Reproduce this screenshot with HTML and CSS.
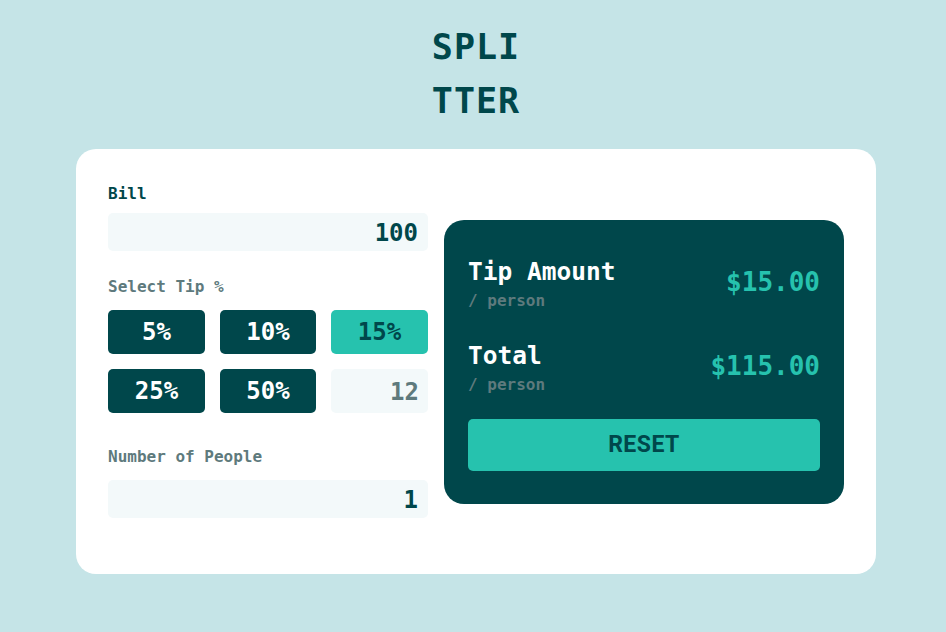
FILE: index.html
```html
<!DOCTYPE html>
<html lang="en">
<head>
<meta charset="utf-8">
<title>Splitter</title>
<link rel="stylesheet" href="styles.css">
</head>
<body>
<main class="page">
  <h1 class="logo">SPLI<br>TTER</h1>
  <section class="card">
    <div class="inputs">
      <div class="field">
        <label class="label label-dark label-bill">Bill</label>
        <div class="input">100</div>
      </div>
      <div class="field field-tips">
        <span class="label">Select Tip %</span>
        <div class="tips">
          <button class="tip">5%</button>
          <button class="tip">10%</button>
          <button class="tip tip-active">15%</button>
          <button class="tip">25%</button>
          <button class="tip">50%</button>
          <div class="input input-custom">12</div>
        </div>
      </div>
      <div class="field field-people">
        <span class="label">Number of People</span>
        <div class="input">1</div>
      </div>
    </div>
    <div class="results">
      <div class="row">
        <div class="row-text">
          <div class="row-title">Tip Amount</div>
          <div class="row-sub">/ person</div>
        </div>
        <div class="amount">$15.00</div>
      </div>
      <div class="row row-last">
        <div class="row-text">
          <div class="row-title">Total</div>
          <div class="row-sub">/ person</div>
        </div>
        <div class="amount">$115.00</div>
      </div>
      <button class="reset">RESET</button>
    </div>
  </section>
</main>
</body>
</html>
```
FILE: styles.css
```css
* { box-sizing: border-box; }
html, body { margin: 0; padding: 0; }
body {
  background: #c5e4e7;
  font-family: "DejaVu Sans Mono", "Liberation Mono", monospace;
  font-weight: bold;
  color: #00474b;
}
.page {
  display: flex;
  flex-direction: column;
  align-items: center;
  padding-top: 20px;
  padding-left: 6px;
}
.logo {
  margin: 0;
  font-size: 35px;
  line-height: 54px;
  letter-spacing: 1px;
  text-align: center;
  color: #00474b;
}
.card {
  margin-top: 21px;
  width: 800px;
  height: 425px;
  background: #fff;
  border-radius: 20px;
  padding: 32px 32px;
  display: flex;
  align-items: center;
  gap: 16px;
}
.inputs {
  width: 320px;
  align-self: flex-start;
  display: flex;
  flex-direction: column;
}
.field { display: flex; flex-direction: column; }
.label {
  font-size: 16px;
  line-height: 20px;
  color: #5e7a7d;
  margin-bottom: 13px;
  padding-top: 2px;
}
.label-dark { color: #00474b; }
.label-bill { padding-top: 3px; margin-bottom: 9px; }
.input {
  height: 38px;
  border-radius: 5px;
  background: #f3f9fa;
  text-align: right;
  padding-right: 10px;
  font-size: 24px;
  line-height: 40px;
  color: #00474b;
}
.field-tips { margin-top: 24px; }
.tips {
  display: grid;
  grid-template-columns: 97px 96px 97px;
  grid-auto-rows: 44px;
  column-gap: 15px;
  row-gap: 15px;
}
.tip {
  border: 0;
  border-radius: 5px;
  background: #00474b;
  color: #fff;
  font-family: inherit;
  font-weight: bold;
  font-size: 24px;
  padding: 0;
}
.tip-active { background: #26c2ae; color: #00474b; }
.input-custom { height: 44px; line-height: 46px; color: #5e7a7d; padding-right: 9px; }
.field-people { margin-top: 32px; }
.results {
  width: 400px;
  height: 284px;
  background: #00474b;
  border-radius: 20px;
  padding: 37px 24px 32px;
  display: flex;
  flex-direction: column;
}
.row {
  display: flex;
  justify-content: space-between;
  align-items: center;
  height: 56px;
  margin-bottom: 28px;
}
.row-last { margin-bottom: 22px; }
.row-title {
  color: #fff;
  font-size: 24.5px;
  line-height: 28px;
}
.row-sub {
  color: #5e7a7d;
  font-size: 16px;
  line-height: 22px;
  margin-top: 4px;
}
.amount {
  color: #26c2ae;
  font-size: 26px;
  line-height: 30px;
  padding-bottom: 5px;
}
.reset {
  height: 52px;
  border: 0;
  border-radius: 5px;
  background: #26c2ae;
  color: #00474b;
  font-family: "Roboto", "Liberation Sans", sans-serif;
  font-weight: bold;
  font-size: 23px;
  letter-spacing: 0.5px;
}
```
